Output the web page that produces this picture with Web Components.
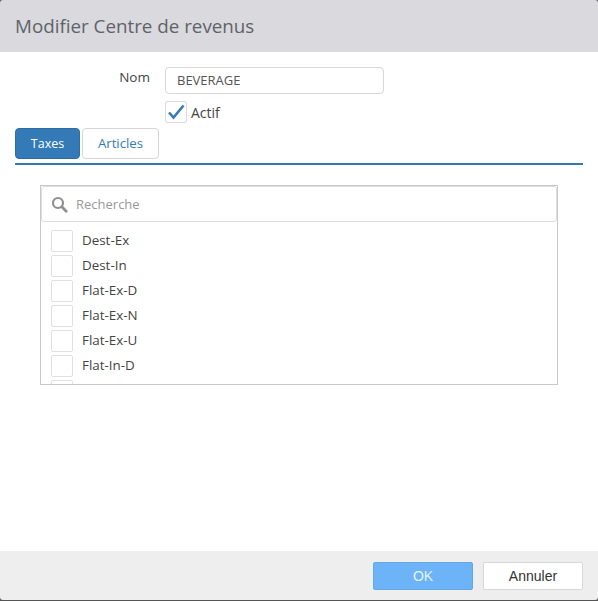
<!DOCTYPE html>
<html>
<head>
<meta charset="utf-8">
<style>
  html, body { margin: 0; height: 100%; background: #fff; overflow: hidden; }
  body { font-family: "Open Sans", sans-serif; }
</style>
</head>
<body>
<edit-dialog heading="Modifier Centre de revenus">
  <form-row label="Nom"><text-box value="BEVERAGE"></text-box></form-row>
  <form-row><check-box checked>Actif</check-box></form-row>
  <tab-bar>
    <tab-button active width="65" size="12.5">Taxes</tab-button>
    <tab-button width="77" size="13.2">Articles</tab-button>
  </tab-bar>
  <pick-list>
    <pick-item>Dest-Ex</pick-item>
    <pick-item>Dest-In</pick-item>
    <pick-item>Flat-Ex-D</pick-item>
    <pick-item>Flat-Ex-N</pick-item>
    <pick-item>Flat-Ex-U</pick-item>
    <pick-item>Flat-In-D</pick-item>
    <pick-item></pick-item>
  </pick-list>
  <dialog-button slot="footer" primary>OK</dialog-button>
  <dialog-button slot="footer">Annuler</dialog-button>
</edit-dialog>

<script>
const define = (name, render) => customElements.define(name, class extends HTMLElement {
  constructor() {
    super();
    this.attachShadow({ mode: 'open' });
  }
  connectedCallback() {
    this.shadowRoot.innerHTML = render(this);
  }
});

define('edit-dialog', (el) => `
  <style>
    :host { display: flex; flex-direction: column; height: 601px; box-sizing: border-box; padding-bottom: 1px; background: #555; }
    header { height: 52px; flex: none; box-sizing: border-box; background: #d9d9de; color: #5f6369; font-size: 18.8px; line-height: 52px; padding-left: 15px; border-radius: 3px 3px 0 0; }
    main { flex: 1; padding: 15px 15px 0; background: #fff; }
    footer { height: 49px; flex: none; background: #eeeeee; display: flex; justify-content: flex-end; align-items: center; gap: 10px; padding-right: 15px; border-radius: 0 0 3px 3px; }
  </style>
  <header>${el.getAttribute('heading')}</header>
  <main><slot></slot></main>
  <footer><slot name="footer"></slot></footer>
`);

define('form-row', (el) => `
  <style>
    :host { display: flex; margin-bottom: 7px; }
    .label { width: 135px; flex: none; text-align: right; font-size: 13.5px; color: #444; line-height: 20px; }
    .field { margin-left: 15px; }
  </style>
  <div class="label">${el.getAttribute('label') ?? ''}</div>
  <div class="field"><slot></slot></div>
`);

define('text-box', (el) => `
  <style>
    :host { display: block; width: 219px; height: 27px; box-sizing: border-box; border: 1px solid #d8d8d8; border-radius: 4px; padding-left: 11px; font-size: 13px; line-height: 25px; color: #555; }
  </style>
  ${el.getAttribute('value')}
`);

define('check-box', (el) => `
  <style>
    :host { display: flex; align-items: center; gap: 4px; font-size: 14px; color: #444; height: 22px; }
    .box { width: 22px; height: 22px; box-sizing: border-box; border: 1px solid #ddd; border-radius: 2px; display: block; }
  </style>
  <svg class="box" viewBox="0 0 20 20"><path d="M3 10.5 L7.5 15.5 L17.5 3.5" fill="none" stroke="#337ab7" stroke-width="2.6"/></svg>
  <slot></slot>
`);

define('tab-bar', () => `
  <style>
    :host { display: flex; gap: 2px; margin-top: -2px; padding-bottom: 4px; border-bottom: 2px solid #337ab7; }
  </style>
  <slot></slot>
`);

define('tab-button', (el) => {
  const active = el.hasAttribute('active');
  return `
  <style>
    :host { display: block; height: 31px; box-sizing: border-box; text-align: center; border-radius: 4px; line-height: 29px;
      width: ${el.getAttribute('width')}px; font-size: ${el.getAttribute('size')}px;
      border: 1px solid ${active ? '#2e6da4' : '#d5d5d5'}; background: ${active ? '#337ab7' : '#fff'}; color: ${active ? '#fff' : '#337ab7'}; }
  </style>
  <slot></slot>`;
});

define('pick-list', () => `
  <style>
    :host { display: block; margin: 20px 25px 0; height: 200px; box-sizing: border-box; border: 1px solid #c8c8c8; overflow: hidden; }
    .search { height: 36px; box-sizing: border-box; border: 1px solid #ddd; border-radius: 3px; display: flex; align-items: center; padding-left: 9px; gap: 8px; font-size: 13px; color: #999; }
    svg { width: 17px; height: 17px; flex: none; }
    .items { padding: 8px 0 0 10px; display: flex; flex-direction: column; gap: 3px; }
  </style>
  <div class="search">
    <svg viewBox="0 0 17 17"><circle cx="7" cy="7" r="5" fill="none" stroke="#8f8f8f" stroke-width="2.2"/><path d="M10.8 10.8 L15.2 15.2" stroke="#8f8f8f" stroke-width="2.8" stroke-linecap="round"/></svg>
    Recherche
  </div>
  <div class="items"><slot></slot></div>
`);

define('pick-item', () => `
  <style>
    :host { display: flex; gap: 9px; height: 22px; flex: none; font-size: 13.4px; line-height: 20px; color: #444; }
    .box { width: 22px; height: 22px; box-sizing: border-box; border: 1px solid #e0e0e0; border-radius: 2px; }
  </style>
  <div class="box"></div><slot></slot>
`);

define('dialog-button', (el) => {
  const primary = el.hasAttribute('primary');
  return `
  <style>
    :host { display: block; width: 100px; height: 28px; box-sizing: border-box; text-align: center; border-radius: 2px; font: 14px/26px "Liberation Sans", Arial, sans-serif;
      border: 1px solid ${primary ? '#64a8e6' : '#d8d8d8'}; background: ${primary ? '#6cb4f7' : '#fff'}; color: ${primary ? '#e6f2fd' : '#333'}; }
  </style>
  <slot></slot>`;
});
</script>
</body>
</html>
